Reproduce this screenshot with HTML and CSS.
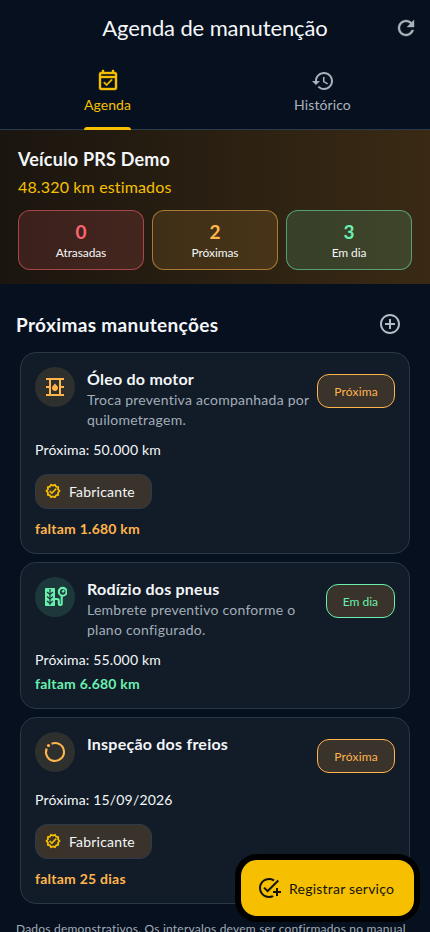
FILE: index.html
```html
<!DOCTYPE html>
<html lang="pt-BR">
<head>
<meta charset="utf-8">
<title>Agenda de manutenção</title>
<link rel="stylesheet" href="styles.css">
</head>
<body>
<svg class="defs" width="0" height="0">
  <symbol id="verified" viewBox="0 0 24 24"><path fill="none" stroke="currentColor" stroke-width="2.600" d="M12 4l3-1.300 1.700 2.800 3.100.8-.3 3.200 2.200 2.500-2.200 2.500.3 3.200-3.100.8-1.700 2.800-3-1.300-3 1.300-1.700-2.800-3.100-.8.3-3.200L2.300 12l2.200-2.500-.3-3.200 3.100-.8L9 2.700z"/><path stroke="currentColor" stroke-width=".5" d="M10.090 13.750l-2.320-2.330-1.480 1.490 3.800 3.810 7.340-7.360-1.480-1.490z"/></symbol>
</svg>
<div class="screen">
  <header class="appbar">
    <h1>Agenda de manutenção</h1>
    <svg class="icon heavy refresh" viewBox="0 0 24 24"><path d="M17.650 6.350C16.200 4.900 14.210 4 12 4c-4.420 0-7.990 3.580-7.990 8s3.570 8 7.990 8c3.730 0 6.840-2.550 7.730-6h-2.080c-.82 2.330-3.040 4-5.650 4-3.310 0-6-2.690-6-6s2.690-6 6-6c1.660 0 3.140.69 4.220 1.780L13 11h7V4l-2.350 2.350z"/></svg>
  </header>
  <nav class="tabs">
    <div class="tab active">
      <svg class="icon heavy" viewBox="0 0 24 24"><path d="M16.530 11.060L15.470 10l-4.880 4.880-2.120-2.120-1.060 1.060L10.590 17l5.940-5.940zM19 3h-1V1h-2v2H8V1H6v2H5c-1.110 0-2 .9-2 2v14c0 1.100.89 2 2 2h14c1.100 0 2-.9 2-2V5c0-1.100-.9-2-2-2zm0 16H5V9h14v10zM5 7V5h14v2H5z"/></svg>
      <span>Agenda</span>
    </div>
    <div class="tab">
      <svg class="icon" viewBox="0 0 24 24"><path d="M13 3c-4.970 0-9 4.030-9 9H1l3.890 3.890.07.14L9 12H6c0-3.870 3.130-7 7-7s7 3.130 7 7-3.130 7-7 7c-1.930 0-3.680-.79-4.940-2.060l-1.420 1.420C8.270 19.990 10.510 21 13 21c4.970 0 9-4.030 9-9s-4.030-9-9-9zm-1 5v5l4.280 2.540.72-1.210-3.500-2.080V8H12z"/></svg>
      <span>Histórico</span>
    </div>
  </nav>
  <section class="summary">
    <h2>Veículo PRS Demo</h2>
    <p class="mileage">48.320 km estimados</p>
    <div class="stats">
      <div class="stat late"><b>0</b><span>Atrasadas</span></div>
      <div class="stat soon"><b>2</b><span>Próximas</span></div>
      <div class="stat ok"><b>3</b><span>Em dia</span></div>
    </div>
  </section>
  <main>
    <div class="section-head">
      <h2>Próximas manutenções</h2>
      <svg class="icon" viewBox="0 0 24 24"><path d="M13 7h-2v4H7v2h4v4h2v-4h4v-2h-4V7zm-1-5C6.480 2 2 6.480 2 12s4.480 10 10 10 10-4.480 10-10S17.520 2 12 2zm0 18c-4.410 0-8-3.590-8-8s3.590-8 8-8 8 3.590 8 8-3.590 8-8 8z"/></svg>
    </div>
    <div class="cards">
      <article class="card amber">
        <div class="row">
          <div class="avatar"><svg class="icon" viewBox="0 0 24 24"><path fill-rule="evenodd" d="M21 13v-2h-3V5h3V3H3v2h3v6H3v2h3v6H3v2h18v-2h-3v-6h3zM16 19H8V5h8v14z"/><path d="M12 16c1.660 0 3-1.320 3-2.950 0-1.300-.52-1.670-3-4.550-2.470 2.860-3 3.240-3 4.550C9 14.680 10.340 16 12 16z"/></svg></div>
          <div class="copy"><h3>Óleo do motor</h3><p>Troca preventiva acompanhada por quilometragem.</p></div>
          <span class="badge">Próxima</span>
        </div>
        <p class="next">Próxima: 50.000 km</p>
        <span class="chip"><svg viewBox="0 0 24 24"><use href="#verified"/></svg>Fabricante</span>
        <p class="left">faltam 1.680 km</p>
      </article>
      <article class="card green">
        <div class="row">
          <div class="avatar"><svg class="icon" viewBox="0 0 24 24"><path d="M3 3h8c.6 0 1 .4 1 1v16c0 .6-.4 1-1 1H3c-.6 0-1-.4-1-1V4c0-.6.4-1 1-1z"/><path class="tread" d="M7 4v16M4 7l3 2.500L10 7M4 11.500L7 14l3-2.500M4 16l3 2.500 3-2.500"/><circle class="line" cx="19.700" cy="6.800" r="3.900"/><path class="line" d="M19.200 7.300l2-2M18.700 10.500V19c0 .7-.4 1-1 1h-.7c-.8 0-1.200-.5-1.200-1.200V15.500c0-1-.6-1.500-1.500-1.500H12"/></svg></div>
          <div class="copy"><h3>Rodízio dos pneus</h3><p>Lembrete preventivo conforme o plano configurado.</p></div>
          <span class="badge">Em dia</span>
        </div>
        <p class="next">Próxima: 55.000 km</p>
        <p class="left">faltam 6.680 km</p>
      </article>
      <article class="card amber">
        <div class="row">
          <div class="avatar"><svg class="icon" viewBox="0 0 24 24"><path class="line" d="M8.500 3.700A9 9 0 1 1 3.700 8.500"/><circle cx="5.500" cy="5.500" r="1.600"/></svg></div>
          <div class="copy"><h3>Inspeção dos freios</h3></div>
          <span class="badge">Próxima</span>
        </div>
        <p class="next">Próxima: 15/09/2026</p>
        <span class="chip"><svg viewBox="0 0 24 24"><use href="#verified"/></svg>Fabricante</span>
        <p class="left">faltam 25 dias</p>
      </article>
    </div>
    <p class="note">Dados demonstrativos. Os intervalos devem ser confirmados no manual</p>
  </main>
  <button class="fab"><svg class="icon" viewBox="0 0 24 24"><path d="M22 5.180L10.590 16.600l-4.240-4.240 1.410-1.410 2.830 2.830 10-10L22 5.180zM12 20c-4.410 0-8-3.590-8-8s3.590-8 8-8c1.570 0 3.040.46 4.280 1.250l1.450-1.450C16.100 2.670 14.130 2 12 2 6.480 2 2 6.480 2 12s4.480 10 10 10c1.730 0 3.360-.44 4.780-1.220l-1.500-1.500C14.280 19.740 13.170 20 12 20zM19 15h-3v2h3v3h2v-3h3v-2h-3v-3h-2v3z"/></svg>Registrar serviço</button>
</div>
</body>
</html>
```
FILE: styles.css
```css
* { box-sizing: border-box; }
body { margin: 0; background: #06101e; color: #f4f6f8; font-family: Lato, sans-serif; font-size: 14px; line-height: 20px; }
h1, h2, h3, p { margin: 0; }
.defs { position: absolute; }
.screen { position: relative; height: 932px; overflow: hidden; }
.icon { display: block; width: 24px; height: 24px; fill: currentColor; flex: none; }
.line { fill: none; stroke: currentColor; stroke-width: 2.1; }
.heavy { stroke: currentColor; stroke-width: .4; }

.appbar { display: grid; grid-template-columns: 48px 1fr 48px; align-items: center; height: 56px; }
.appbar h1 { grid-column: 2; text-align: center; font-size: 22px; font-weight: 400; line-height: 28px; letter-spacing: -.12px; }
.refresh { justify-self: center; color: #aab3bb; }

.tabs { display: grid; grid-template-columns: 1fr 1fr; height: 74px; border-bottom: 1px solid #2b3a4d; }
.tab { display: flex; flex-direction: column; align-items: center; justify-self: center; height: 74px; padding-top: 13px; color: #aab3bd; letter-spacing: .1px; }
.tab span { margin-top: 2px; }
.tab.active { color: #f6c000; }
.tab.active::after { content: ""; width: 100%; height: 3px; margin-top: 12px; border-radius: 3px 3px 0 0; background: #f6c000; }

.summary { height: 154px; padding: 17px 18px 14px; background: linear-gradient(90deg, #1a150f, #3a2a14); }
.summary h2 { font-size: 18px; line-height: 24px; letter-spacing: .2px; }
.mileage { margin-top: 4px; color: #f6c000; font-size: 16px; line-height: 24px; letter-spacing: .15px; }
.stats { display: grid; grid-template-columns: repeat(3, 1fr); gap: 8px; margin-top: 11px; }
.stat { display: flex; flex-direction: column; align-items: center; height: 60px; padding-top: 9px; border: 1px solid; border-radius: 12px; }
.stat b { font-size: 19px; line-height: 24px; }
.stat span { margin-top: 1px; font-size: 12px; line-height: 16px; letter-spacing: -.1px; color: #f4f6f8; }
.late { color: #ff6570; background: rgba(255, 101, 112, .14); border-color: rgba(255, 101, 112, .55); }
.soon { color: #ffb74d; background: rgba(255, 183, 77, .12); border-color: rgba(255, 183, 77, .55); }
.ok { color: #69f0ae; background: rgba(105, 240, 174, .14); border-color: rgba(105, 240, 174, .55); }

.section-head { display: flex; align-items: center; justify-content: space-between; height: 68px; padding: 13px 28px 0 16px; }
.section-head h2 { font-size: 19px; line-height: 24px; letter-spacing: .35px; }
.section-head .icon { margin-top: -2px; color: #b3bcc5; }
.cards { display: grid; gap: 8px; padding: 0 20px; }
.card { padding: 14px; border: 1px solid #2a3746; border-radius: 16px; background: #111c28; }
.amber { color: #ffb44c; }
.green { color: #69f0ae; }
.row { display: flex; min-height: 48px; }
.avatar { display: grid; place-items: center; flex: none; width: 40px; height: 40px; border-radius: 50%; background: #2e302e; }
.green .avatar { background: #1d383a; }
.copy { flex: 1; margin-left: 12px; padding-top: 1px; color: #a3adb8; letter-spacing: .25px; }
.copy h3 { margin-bottom: 1px; color: #f4f6f8; font-size: 16px; line-height: 21px; letter-spacing: .23px; }
.badge { align-self: flex-start; height: 34px; margin: 7px 0 0 8px; padding: 0 16px; border: 1px solid; border-radius: 12px; background: #39332c; font-size: 12px; line-height: 33px; }
.amber .badge { letter-spacing: .2px; }
.next { margin-top: 10px; color: #f4f6f8; letter-spacing: .18px; }
.chip { display: flex; align-items: center; width: 117px; height: 35px; margin: 14px 0 10px; padding-left: 9px; border: 1px solid #2c3a4a; border-radius: 12px; background: #39332c; color: #f4f6f8; letter-spacing: .2px; }
.chip svg { width: 16px; height: 16px; margin: -1px 8px 0 0; color: #f6c000; fill: currentColor; }
.left { margin-top: 4px; font-weight: 700; letter-spacing: .24px; }
.tread { fill: none; stroke: #1d383a; stroke-width: 1.2; }
.note { margin: 15px 16px 0; color: #a3adb8; font-size: 12px; letter-spacing: .21px; white-space: nowrap; }
.fab { position: absolute; right: 16px; bottom: 16px; display: flex; align-items: center; width: 173px; height: 56px; padding: 0 18px; gap: 8px; border: 0; border-radius: 16px; background: #f6c000; box-shadow: 0 0 0 6px #000; color: #14130c; font: 400 14px Lato, sans-serif; letter-spacing: .22px; white-space: nowrap; }
.fab .icon { margin-left: -2px; }
```
